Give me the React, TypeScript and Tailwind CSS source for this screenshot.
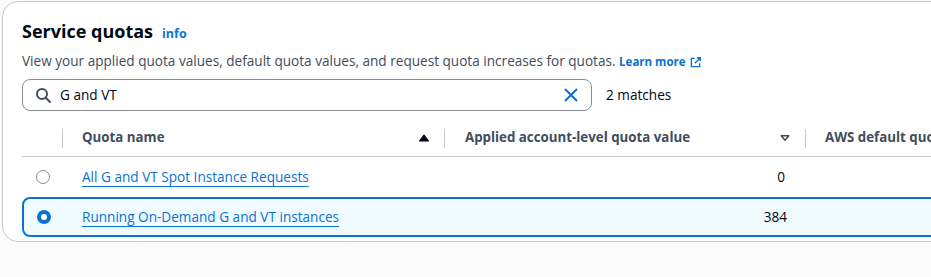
import React from "react";

const font = { fontFamily: '"Open Sans", "Noto Sans", Arial, sans-serif' };

function SearchIcon() {
  return (
    <svg width="16" height="16" viewBox="0 0 16 16" fill="none" stroke="#414d5c" strokeWidth="2">
      <circle cx="7" cy="7" r="5" />
      <path d="M10.5 10.5 15 15" strokeLinecap="round" />
    </svg>
  );
}

function ClearIcon() {
  return (
    <svg width="16" height="16" viewBox="0 0 16 16" fill="none" stroke="#0972d3" strokeWidth="2">
      <path d="m2 2 12 12M14 2 2 14" />
    </svg>
  );
}

function ExternalIcon() {
  return (
    <svg width="11" height="11" viewBox="0 0 16 16" fill="none" stroke="#0972d3" strokeWidth="2">
      <path d="M14 9v5H2V2h5" />
      <path d="M10 1h5v5M15 1 7 9" />
    </svg>
  );
}

function SortUp() {
  return (
    <svg width="12" height="12" viewBox="0 0 16 16">
      <path d="M2 12 8 4l6 8Z" fill="#000716" stroke="#000716" strokeWidth="1.5" strokeLinejoin="round" />
    </svg>
  );
}

function SortDown() {
  return (
    <svg width="12" height="12" viewBox="0 0 16 16" fill="none">
      <path d="M3 5h10l-5 6Z" stroke="#414d5c" strokeWidth="2" strokeLinejoin="round" />
    </svg>
  );
}

function Radio({ checked }: { checked?: boolean }) {
  return checked ? (
    <span className="block w-[14px] h-[14px] rounded-full border-[4px] border-[#0972d3] bg-white" />
  ) : (
    <span className="block w-[14px] h-[14px] rounded-full border border-[#8c8c94] bg-white" />
  );
}

const cols = "grid grid-cols-[40px_382px_361px_1fr]";

export default function App() {
  return (
    <div className="w-[931px] h-[277px] overflow-hidden bg-[#fbfbfb] pt-[1px] pl-[2px]" style={font}>
      <div className="w-[1000px] h-[241px] bg-white border border-[#c6c6cd] rounded-[16px] pl-[19px] pt-[15px]">
        <div className="flex items-baseline gap-[9px]">
          <h1 className="text-[18px] leading-[28px] font-bold text-[#000716]">Service quotas</h1>
          <a className="text-[12.5px] font-bold text-[#0972d3]">info</a>
        </div>
        <p className="mt-[6px] text-[13.6px] leading-[20px] text-[#414d5c]">
          View your applied quota values, default quota values, and request quota increases for quotas.{" "}
          <a className="inline-flex items-center gap-[4px] text-[11.5px] font-bold text-[#0972d3]">
            Learn more <ExternalIcon />
          </a>
        </p>
        <div className="mt-[7px] flex items-center gap-[14px]">
          <div className="w-[570px] h-[32px] border border-[#8c8c94] rounded-[8px] flex items-center pl-[12px] pr-[12px]">
            <SearchIcon />
            <span className="ml-[9px] flex-1 text-[13.6px] text-[#000716]">G and VT</span>
            <ClearIcon />
          </div>
          <span className="text-[13.6px] text-[#000716]">2 matches</span>
        </div>
        <div className="mt-[9px]">
          <div className={`${cols} h-[37px] items-center border-b border-[#c6c6cd] text-[13.3px] font-bold text-[#414d5c]`}>
            <div />
            <div className="flex items-center h-[19px] border-l border-[#c6c6cd] pl-[19px] pr-[14px]">
              <span className="flex-1">Quota name</span>
              <SortUp />
            </div>
            <div className="flex items-center h-[19px] border-l border-[#c6c6cd] pl-[20px] pr-[14px]">
              <span className="flex-1">Applied account-level quota value</span>
              <SortDown />
            </div>
            <div className="flex items-center h-[19px] border-l border-[#c6c6cd] pl-[19px] whitespace-nowrap">
              AWS default quota value
            </div>
          </div>
          <div className={`${cols} h-[40px] items-center text-[13.6px]`}>
            <div className="flex justify-center pl-[1px]">
              <Radio />
            </div>
            <div className="pl-[20px]">
              <a className="text-[#0972d3] underline underline-offset-[4px]">All G and VT Spot Instance Requests</a>
            </div>
            <div className="text-right pr-[20px] text-[#000716]">0</div>
            <div />
          </div>
          <div className={`${cols} h-[40px] items-center text-[13.6px] bg-[#f0fbff] border-2 border-[#0972d3] rounded-l-[8px]`}>
            <div className="flex justify-center -ml-[1px]">
              <Radio checked />
            </div>
            <div className="pl-[18px]">
              <a className="text-[#0972d3] underline underline-offset-[4px]">Running On-Demand G and VT instances</a>
            </div>
            <div className="text-right pr-[20px] text-[#000716]">384</div>
            <div />
          </div>
        </div>
      </div>
    </div>
  );
}
